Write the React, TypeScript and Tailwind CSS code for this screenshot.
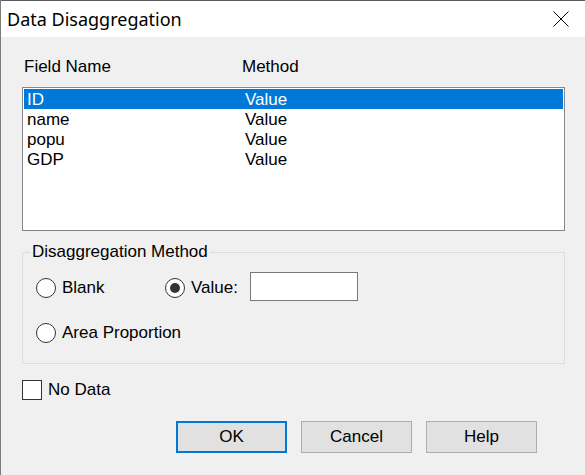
import React, { useState } from "react";

type Row = { field: string; method: string };

const ROWS: Row[] = [
  { field: "ID", method: "Value" },
  { field: "name", method: "Value" },
  { field: "popu", method: "Value" },
  { field: "GDP", method: "Value" },
];

function Radio({ checked, label, onClick }: { checked: boolean; label: string; onClick: () => void }) {
  return (
    <button type="button" onClick={onClick} className="flex items-center gap-[6px] leading-[20px]">
      <span className="w-[20px] h-[20px] rounded-full border border-[#333] bg-white flex items-center justify-center shrink-0">
        {checked && <span className="w-[10px] h-[10px] rounded-full bg-[#333]" />}
      </span>
      <span>{label}</span>
    </button>
  );
}

export default function App() {
  const [selected, setSelected] = useState(0);
  const [method, setMethod] = useState<"blank" | "value" | "area">("value");
  const [noData, setNoData] = useState(false);

  return (
    <div className="w-[585px] h-[475px] bg-[#f0f0f0] flex flex-col overflow-hidden border-l border-[#7b7b7b] font-['Liberation_Sans',Arial,sans-serif] text-[17px] text-black">
      {/* Title bar */}
      <div className="h-[37px] shrink-0 bg-white border-t border-[#5a5a5a] flex items-center justify-between pl-[6px] pr-[16px]">
        <span className="font-['Noto_Sans',sans-serif] text-[18px] leading-[20px] mt-[-1px]">Data Disaggregation</span>
        <svg width="16" height="16" viewBox="0 0 16 16" className="mt-[-1px]">
          <path d="M0.5 0.5 L15.5 15.5 M15.5 0.5 L0.5 15.5" stroke="#000" strokeWidth="1" fill="none" />
        </svg>
      </div>

      <div className="flex flex-col pl-[21px] pr-[20px]">
        {/* Column headers */}
        <div className="grid grid-cols-[218px_1fr] mt-[20px] leading-[20px] pl-[2px]">
          <span>Field Name</span>
          <span>Method</span>
        </div>

        {/* Field list */}
        <div className="mt-[10px] h-[144px] border border-[#828790] bg-white p-[1px]">
          {ROWS.map((r, i) => (
            <div
              key={r.field}
              onClick={() => setSelected(i)}
              className={`grid grid-cols-[218px_1fr] h-[20px] leading-[21px] pl-[3px] ${
                i === selected ? "bg-[#0078d7] text-white" : ""
              }`}
            >
              <span>{r.field}</span>
              <span>{r.method}</span>
            </div>
          ))}
        </div>

        {/* Disaggregation method group */}
        <fieldset className="mt-[11px] border border-[#dcdcdc] pb-[20px]">
          <legend className="ml-[7px] px-[2px] leading-[20px]">Disaggregation Method</legend>
          <div className="flex flex-col pl-[13px] pt-[10px]">
            <div className="flex items-center">
              <div className="w-[129px] mt-[3px]">
                <Radio checked={method === "blank"} label="Blank" onClick={() => setMethod("blank")} />
              </div>
              <div className="mt-[3px]">
                <Radio checked={method === "value"} label="Value:" onClick={() => setMethod("value")} />
              </div>
              <input
                type="text"
                className="ml-[12px] w-[108px] h-[29px] border border-[#7a7a7a] bg-white outline-none px-[3px]"
              />
            </div>
            <div className="mt-[22px]">
              <Radio checked={method === "area"} label="Area Proportion" onClick={() => setMethod("area")} />
            </div>
          </div>
        </fieldset>

        {/* No data */}
        <button
          type="button"
          onClick={() => setNoData(!noData)}
          className="mt-[16px] flex items-center gap-[6px] leading-[20px] self-start"
        >
          <span className="w-[20px] h-[20px] border border-[#333] bg-white flex items-center justify-center text-[14px]">
            {noData ? "✓" : ""}
          </span>
          <span>No Data</span>
        </button>

        {/* Buttons */}
        <div className="mt-[21px] flex justify-end gap-[14px] pr-[28px]">
          <button className="w-[111px] h-[32px] border-2 border-[#0078d7] bg-[#e1e1e1]">OK</button>
          <button className="w-[111px] h-[32px] border border-[#adadad] bg-[#e1e1e1]">Cancel</button>
          <button className="w-[111px] h-[32px] border border-[#adadad] bg-[#e1e1e1]">Help</button>
        </div>
      </div>
    </div>
  );
}
